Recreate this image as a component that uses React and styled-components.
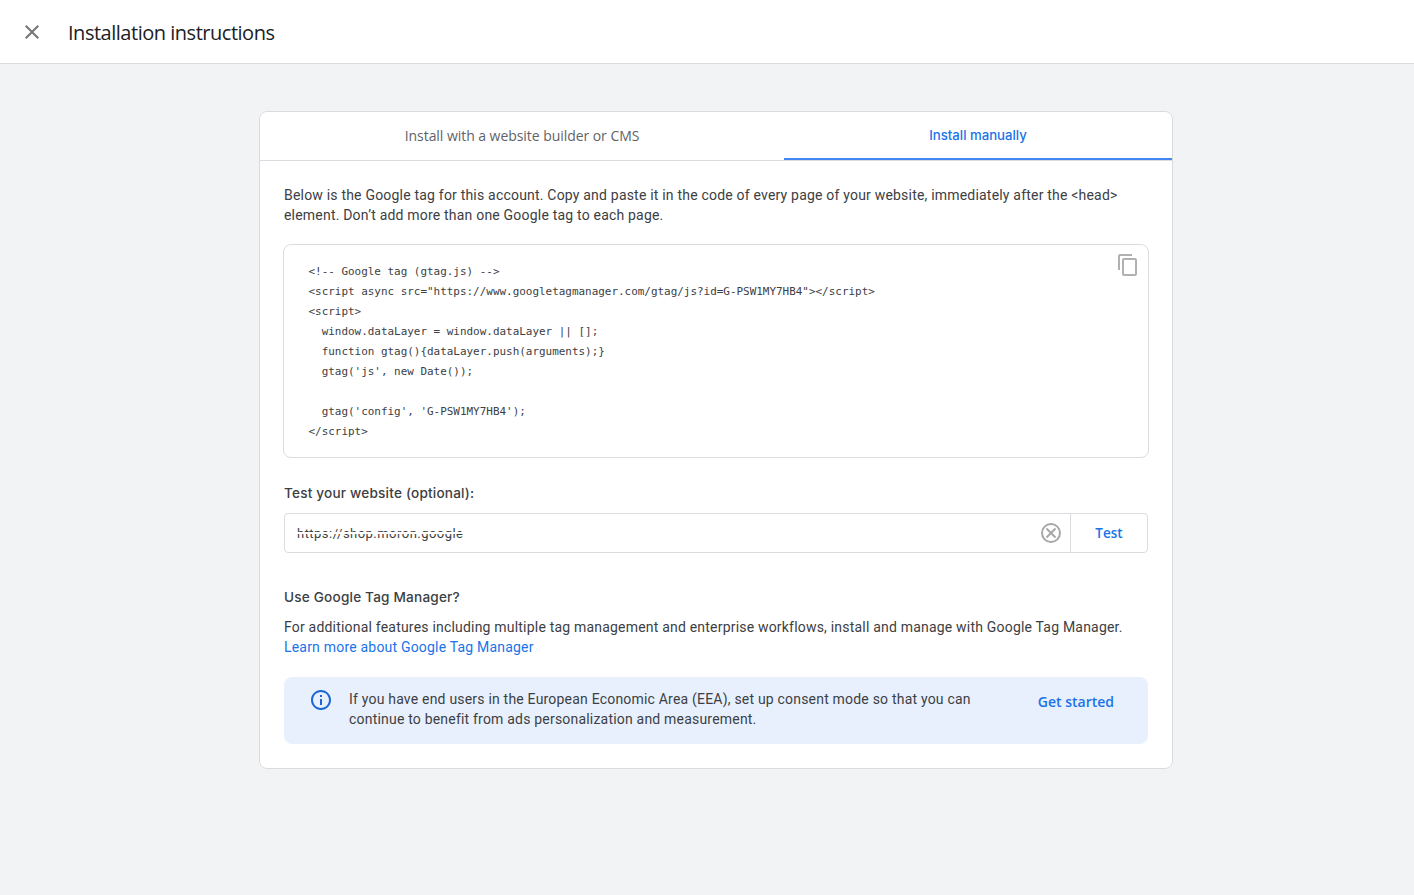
import React from "react";
import styled, { createGlobalStyle } from "styled-components";

const GlobalStyle = createGlobalStyle`
  html, body {
    margin: 0;
    padding: 0;
    background: #f1f3f4;
  }
  * {
    box-sizing: border-box;
  }
`;

const Page = styled.div`
  min-height: 895px;
  background: #f1f3f4;
  font-family: Roboto, "Liberation Sans", sans-serif;
  color: #3c4043;
`;

const Header = styled.header`
  display: flex;
  align-items: center;
  height: 64px;
  background: #fff;
  border-bottom: 1px solid #dadce0;
`;

const CloseButton = styled.button`
  display: flex;
  align-items: center;
  justify-content: center;
  width: 24px;
  height: 24px;
  margin-left: 20px;
  padding: 0;
  border: none;
  background: none;
  color: #757575;
  cursor: pointer;
`;

const Title = styled.h1`
  margin: 2px 0 0 24px;
  font-family: "Open Sans", sans-serif;
  font-size: 20px;
  font-weight: 400;
  letter-spacing: -0.48px;
  color: #202124;
`;

const Card = styled.main`
  width: 914px;
  margin: 47px 0 0 259px;
  background: #fff;
  border: 1px solid #dadce0;
  border-radius: 8px;
`;

const Tabs = styled.nav`
  display: grid;
  grid-template-columns: 524px 1fr;
  height: 49px;
  border-bottom: 1px solid #dadce0;
`;

const Tab = styled.div`
  display: flex;
  align-items: center;
  justify-content: center;
  font-family: ${(p) => (p.$active ? "Inter" : '"Open Sans"')}, sans-serif;
  font-size: ${(p) => (p.$active ? "13.2px" : "14px")};
  letter-spacing: ${(p) => (p.$active ? "0" : "-0.05px")};
  color: ${(p) => (p.$active ? "#1a73e8" : "#5f6368")};
  font-weight: ${(p) => (p.$active ? 500 : 400)};
  border-bottom: 2px solid ${(p) => (p.$active ? "#4285f4" : "transparent")};
`;

const Body = styled.div`
  padding: 24px;
`;

const Paragraph = styled.p`
  margin: 0;
  font-size: 14px;
  line-height: 20px;
  letter-spacing: 0.2px;
  color: #3c4043;
`;

const CodeBox = styled.div`
  position: relative;
  margin: 19px -1px 0;
  padding: 17px 24px 15px 24.5px;
  border: 1px solid #dadce0;
  border-radius: 8px;
`;

const Code = styled.pre`
  margin: 0;
  font-family: "DejaVu Sans Mono", monospace;
  font-size: 10.95px;
  line-height: 20px;
  color: #3c4043;
`;

const CopyButton = styled.button`
  position: absolute;
  top: 8px;
  right: 8px;
  display: flex;
  width: 24px;
  height: 24px;
  padding: 0;
  border: none;
  background: none;
  color: #b1b1b1;
`;

const Label = styled.div`
  margin-top: 25px;
  font-family: Inter, sans-serif;
  font-size: 13.6px;
  font-weight: 500;
  line-height: 20px;
  letter-spacing: 0.19px;
  color: #3c4043;
`;

const InputRow = styled.div`
  display: flex;
  align-items: center;
  height: 40px;
  margin-top: 10px;
  border: 1px solid #dadce0;
  border-radius: 4px;
`;

const UrlField = styled.div`
  flex: 1;
  display: flex;
  align-items: center;
  height: 100%;
  padding: 0 7px 0 12px;
  border-right: 1px solid #dadce0;
`;

const UrlText = styled.span`
  position: relative;
  flex: 1;
  font-size: 13px;
  letter-spacing: 0.47px;
  color: #3c4043;

  &::after {
    content: "";
    position: absolute;
    left: 0;
    width: 175px;
    top: 6px;
    height: 2px;
    background: #fff;
  }
`;

const ClearIcon = styled.span`
  display: flex;
  color: #a8a8a8;
`;

const TestButton = styled.button`
  width: 76px;
  height: 100%;
  padding: 0;
  border: none;
  background: none;
  font-family: "Open Sans", sans-serif;
  font-size: 13.5px;
  font-weight: 600;
  color: #1a73e8;
`;

const SubHeading = styled(Label)`
  margin-top: 34px;
`;

const Section = styled.div`
  margin-top: 10px;
`;

const BlueLink = styled.a`
  color: #1a73e8;
  text-decoration: none;
`;

const Banner = styled.div`
  display: flex;
  align-items: flex-start;
  height: 67px;
  margin-top: 20px;
  padding: 12px 34px 0 25px;
  background: #e8f0fe;
  border-radius: 8px;
`;

const InfoIcon = styled.span`
  display: flex;
  flex: none;
  margin: -1px 16px 0 0;
  color: #1967d2;
`;

const BannerText = styled(Paragraph)`
  flex: 1;
  max-width: 650px;
`;

const BannerAction = styled.a`
  margin-left: auto;
  padding-top: 3px;
  font-family: "Open Sans", sans-serif;
  font-size: 14px;
  font-weight: 600;
  line-height: 20px;
  color: #1a73e8;
`;

const code = `<!-- Google tag (gtag.js) -->
<script async src="https://www.googletagmanager.com/gtag/js?id=G-PSW1MY7HB4"></script>
<script>
  window.dataLayer = window.dataLayer || [];
  function gtag(){dataLayer.push(arguments);}
  gtag('js', new Date());

  gtag('config', 'G-PSW1MY7HB4');
</script>`;

const Icon = ({ size, d }) => (
  <svg width={size} height={size} viewBox="0 0 24 24" fill="currentColor">
    <path d={d} />
  </svg>
);

const ClearGlyph = () => (
  <svg width="24" height="24" viewBox="0 0 24 24" fill="none" stroke="currentColor" strokeWidth="2">
    <circle cx="12" cy="12" r="9" />
    <path d="M7.5 7.5l9 9M16.5 7.5l-9 9" />
  </svg>
);

export default function App() {
  return (
    <Page>
      <GlobalStyle />
      <Header>
        <CloseButton aria-label="Close">
          <Icon
            size={24}
            d="M19 6.41 17.59 5 12 10.59 6.41 5 5 6.41 10.59 12 5 17.59 6.41 19 12 13.41 17.59 19 19 17.59 13.41 12z"
          />
        </CloseButton>
        <Title>Installation instructions</Title>
      </Header>
      <Card>
        <Tabs>
          <Tab>Install with a website builder or CMS</Tab>
          <Tab $active>Install manually</Tab>
        </Tabs>
        <Body>
          <Paragraph>
            Below is the Google tag for this account. Copy and paste it in the code of every page of
            your website, immediately after the &lt;head&gt; element. Don’t add more than one Google
            tag to each page.
          </Paragraph>
          <CodeBox>
            <Code>{code}</Code>
            <CopyButton aria-label="Copy">
              <Icon
                size={24}
                d="M16 1H4c-1.1 0-2 .9-2 2v14h2V3h12V1zm3 4H8c-1.1 0-2 .9-2 2v14c0 1.1.9 2 2 2h11c1.1 0 2-.9 2-2V7c0-1.1-.9-2-2-2zm0 16H8V7h11v14z"
              />
            </CopyButton>
          </CodeBox>
          <Label>Test your website (optional):</Label>
          <InputRow>
            <UrlField>
              <UrlText>https://shop.moron.google</UrlText>
              <ClearIcon>
                <ClearGlyph />
              </ClearIcon>
            </UrlField>
            <TestButton>Test</TestButton>
          </InputRow>
          <SubHeading>Use Google Tag Manager?</SubHeading>
          <Section>
            <Paragraph>
              For additional features including multiple tag management and enterprise workflows,
              install and manage with Google Tag Manager.
              <br />
              <BlueLink>Learn more about Google Tag Manager</BlueLink>
            </Paragraph>
          </Section>
          <Banner>
            <InfoIcon>
              <Icon
                size={24}
                d="M11 7h2v2h-2zm0 4h2v6h-2zm1-9C6.48 2 2 6.48 2 12s4.48 10 10 10 10-4.48 10-10S17.52 2 12 2zm0 18c-4.41 0-8-3.59-8-8s3.59-8 8-8 8 3.59 8 8-3.59 8-8 8z"
              />
            </InfoIcon>
            <BannerText>
              If you have end users in the European Economic Area (EEA), set up consent mode so that
              you can continue to benefit from ads personalization and measurement.
            </BannerText>
            <BannerAction>Get started</BannerAction>
          </Banner>
        </Body>
      </Card>
    </Page>
  );
}
